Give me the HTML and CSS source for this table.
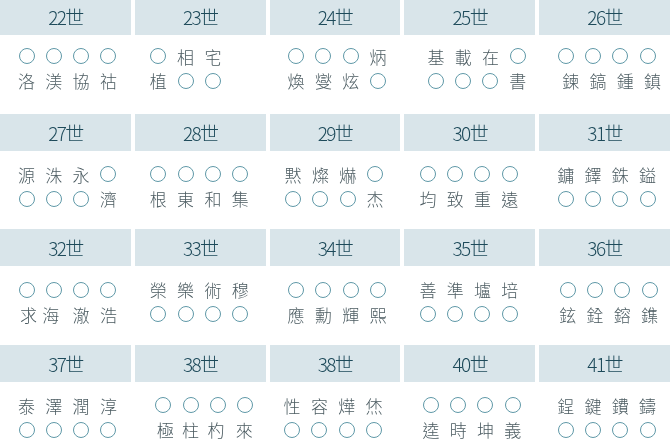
FILE: index.html
```html
<!DOCTYPE html>
<html lang="zh-Hant">
<head>
<meta charset="utf-8">
<title>世系字輩</title>
<link rel="stylesheet" href="styles.css">
</head>
<body>
<div class="board">
  <section class="gen">
    <h2 class="gen-head">22世</h2>
    <div class="gen-body">
      <i class="o"></i><i class="o"></i><i class="o"></i><i class="o"></i>
      <span>洛</span><span>渼</span><span>協</span><span>祜</span>
    </div>
  </section>
  <section class="gen">
    <h2 class="gen-head">23世</h2>
    <div class="gen-body at15">
      <i class="o"></i><span>相</span><span>宅</span><b></b>
      <span>植</span><i class="o"></i><i class="o"></i><b></b>
    </div>
  </section>
  <section class="gen">
    <h2 class="gen-head">24世</h2>
    <div class="gen-body">
      <i class="o"></i><i class="o"></i><i class="o"></i><span>炳</span>
      <span>煥</span><span>燮</span><span>炫</span><i class="o"></i>
    </div>
  </section>
  <section class="gen">
    <h2 class="gen-head">25世</h2>
    <div class="gen-body at23">
      <span>基</span><span>載</span><span>在</span><i class="o"></i>
      <i class="o"></i><i class="o"></i><i class="o"></i><span>書</span>
    </div>
  </section>
  <section class="gen">
    <h2 class="gen-head">26世</h2>
    <div class="gen-body shift2">
      <i class="o"></i><i class="o"></i><i class="o"></i><i class="o"></i>
      <span>鍊</span><span>鎬</span><span>鍾</span><span>鎮</span>
    </div>
  </section>

  <section class="gen">
    <h2 class="gen-head">27世</h2>
    <div class="gen-body">
      <span>源</span><span>洙</span><span>永</span><i class="o"></i>
      <i class="o"></i><i class="o"></i><i class="o"></i><span>濟</span>
    </div>
  </section>
  <section class="gen">
    <h2 class="gen-head">28世</h2>
    <div class="gen-body at15">
      <i class="o"></i><i class="o"></i><i class="o"></i><i class="o"></i>
      <span>根</span><span>東</span><span>和</span><span>集</span>
    </div>
  </section>
  <section class="gen">
    <h2 class="gen-head">29世</h2>
    <div class="gen-body at15">
      <span>黙</span><span>燦</span><span>爀</span><i class="o"></i>
      <i class="o"></i><i class="o"></i><i class="o"></i><span>杰</span>
    </div>
  </section>
  <section class="gen">
    <h2 class="gen-head">30世</h2>
    <div class="gen-body at15">
      <i class="o"></i><i class="o"></i><i class="o"></i><i class="o"></i>
      <span>均</span><span>致</span><span>重</span><span>遠</span>
    </div>
  </section>
  <section class="gen">
    <h2 class="gen-head">31世</h2>
    <div class="gen-body">
      <span>鏞</span><span>鐸</span><span>銖</span><span>鎰</span>
      <i class="o"></i><i class="o"></i><i class="o"></i><i class="o"></i>
    </div>
  </section>

  <section class="gen">
    <h2 class="gen-head">32世</h2>
    <div class="gen-body">
      <i class="o"></i><i class="o"></i><i class="o"></i><i class="o"></i>
      <span class="nudge-r">求</span><span class="nudge-l">海</span><span>澈</span><span>浩</span>
    </div>
  </section>
  <section class="gen">
    <h2 class="gen-head">33世</h2>
    <div class="gen-body at15">
      <span>榮</span><span>樂</span><span>術</span><span>穆</span>
      <i class="o"></i><i class="o"></i><i class="o"></i><i class="o"></i>
    </div>
  </section>
  <section class="gen">
    <h2 class="gen-head">34世</h2>
    <div class="gen-body">
      <i class="o"></i><i class="o"></i><i class="o"></i><i class="o"></i>
      <span>應</span><span>勳</span><span>輝</span><span>熙</span>
    </div>
  </section>
  <section class="gen">
    <h2 class="gen-head">35世</h2>
    <div class="gen-body at15">
      <span>善</span><span>準</span><span>壚</span><span>培</span>
      <i class="o"></i><i class="o"></i><i class="o"></i><i class="o"></i>
    </div>
  </section>
  <section class="gen">
    <h2 class="gen-head">36世</h2>
    <div class="gen-body at20">
      <i class="o"></i><i class="o"></i><i class="o"></i><i class="o"></i>
      <span>鉉</span><span>銓</span><span>鎔</span><span>鏶</span>
    </div>
  </section>

  <section class="gen">
    <h2 class="gen-head">37世</h2>
    <div class="gen-body">
      <span>泰</span><span>澤</span><span>潤</span><span>淳</span>
      <i class="o"></i><i class="o"></i><i class="o"></i><i class="o"></i>
    </div>
  </section>
  <section class="gen">
    <h2 class="gen-head">38世</h2>
    <div class="gen-body at20 tight2">
      <i class="o"></i><i class="o"></i><i class="o"></i><i class="o"></i>
      <span>極</span><span>柱</span><span>杓</span><span>來</span>
    </div>
  </section>
  <section class="gen">
    <h2 class="gen-head">38世</h2>
    <div class="gen-body at14">
      <span>性</span><span>容</span><span>燁</span><span>烋</span>
      <i class="o"></i><i class="o"></i><i class="o"></i><i class="o"></i>
    </div>
  </section>
  <section class="gen">
    <h2 class="gen-head">40世</h2>
    <div class="gen-body">
      <i class="o"></i><i class="o"></i><i class="o"></i><i class="o"></i>
      <span>逵</span><span>時</span><span>坤</span><span>義</span>
    </div>
  </section>
  <section class="gen">
    <h2 class="gen-head">41世</h2>
    <div class="gen-body">
      <span>鋥</span><span>鍵</span><span>鐨</span><span>鑄</span>
      <i class="o"></i><i class="o"></i><i class="o"></i><i class="o"></i>
    </div>
  </section>
</div>
</body>
</html>
```

FILE: styles.css
```css
html, body {
  margin: 0;
  padding: 0;
  background: #ffffff;
}

body {
  font-family: "Noto Sans CJK TC", "Noto Sans CJK SC", "Noto Sans", sans-serif;
  overflow: hidden;
  -webkit-font-smoothing: antialiased;
}

.board {
  width: 670px;
  margin-top: -2px;
  display: grid;
  grid-template-columns: repeat(5, 1fr);
  column-gap: 4px;
  row-gap: 0;
  will-change: transform;
}

.gen {
  display: flex;
  flex-direction: column;
}

.gen-head {
  margin: 0;
  height: 37px;
  line-height: 37px;
  background: #d9e5ea;
  color: #1d4a5a;
  font-size: 19px;
  font-weight: 300;
  letter-spacing: -1.6px;
  text-align: center;
}

.gen-body {
  height: 78.5px;
  box-sizing: border-box;
  padding: 11.5px 0 0 18px;
  display: grid;
  grid-template-columns: repeat(4, 17px);
  grid-auto-rows: 24.5px;
  align-content: start;
  column-gap: 10.3px;
  align-items: center;
  justify-items: center;
}

.gen:nth-child(-n+5) .gen-body {
  padding-top: 9px;
}

.gen-body.at14 { padding-left: 14px; }
.gen-body.at15 { padding-left: 15px; }
.gen-body.at20 { padding-left: 20px; }
.gen-body.at23 { padding-left: 23px; }

.gen-body span {
  font-size: 17px;
  line-height: 1;
  font-weight: 300;
  color: #4b5b61;
}

.gen-body b {
  display: block;
}

.o {
  display: block;
  width: 16px;
  height: 16px;
  box-sizing: border-box;
  border: 1.3px solid #5f98a7;
  border-radius: 50%;
}

.shift2 span { position: relative; left: 5px; }
.tight2 span:nth-of-type(1) { position: relative; left: 2px; }
.tight2 span:nth-of-type(3) { position: relative; left: -2px; }
.tight2 span:nth-of-type(4) { position: relative; left: -1px; }
.nudge-r { position: relative; left: 2px; }
.nudge-l { position: relative; left: -3px; }
```
